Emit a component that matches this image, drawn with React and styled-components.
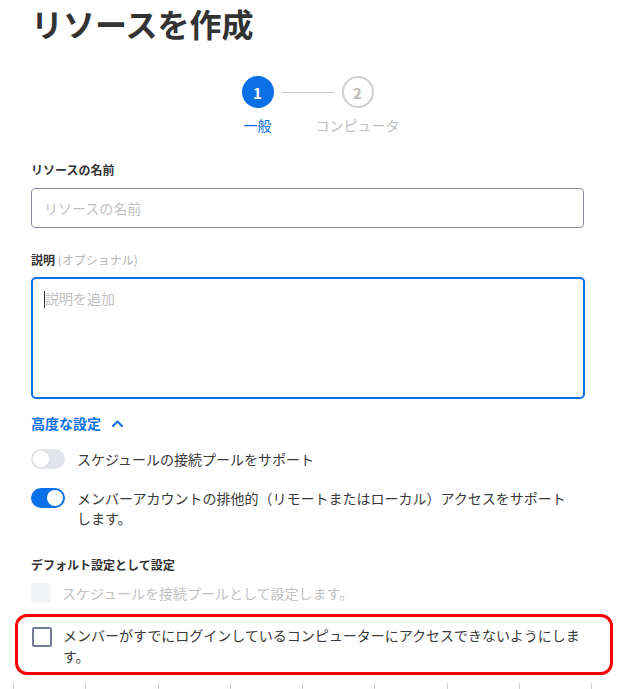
import React, { useState } from 'react'
import styled, { createGlobalStyle } from 'styled-components'

const GlobalStyle = createGlobalStyle`
	body {
		margin: 0;
		background: #fff;
		font-family: "Noto Sans CJK JP", "Noto Sans", sans-serif;
		color: #333;
	}
`

const BLUE = '#0b6fe6'

const Page = styled.div`
	width: 553px;
	padding-left: 31px;
	display: flex;
	flex-direction: column;
`

const Title = styled.h1`
	margin: 3px 0 0 0;
	font-size: 32px;
	line-height: 40px;
	font-weight: 700;
	color: #333;
`

const Stepper = styled.div`
	margin-top: 33px;
	display: flex;
	justify-content: center;
	align-items: flex-start;
`

const Step = styled.div`
	width: 32px;
	display: flex;
	flex-direction: column;
	align-items: center;
`

const StepCircle = styled.div`
	width: 32px;
	height: 32px;
	box-sizing: border-box;
	border-radius: 50%;
	display: flex;
	align-items: center;
	justify-content: center;
	font-size: 15px;
	font-weight: 700;
	background: ${(p) => (p.$active ? BLUE : '#fff')};
	border: 2px solid ${(p) => (p.$active ? BLUE : '#cfcfcf')};
	color: ${(p) => (p.$active ? '#fff' : '#bdbdbd')};
`

const StepLabel = styled.div`
	margin-top: 7px;
	font-size: 14px;
	line-height: 20px;
	white-space: nowrap;
	color: ${(p) => (p.$active ? BLUE : '#bdbdbd')};
`

const Connector = styled.div`
	width: 52px;
	height: 1px;
	margin: 16px 8px 0;
	background: #c4c4c4;
`

const FieldLabel = styled.label`
	margin-top: ${(p) => p.$top}px;
	font-size: 12px;
	line-height: 18px;
	font-weight: 700;
	color: #333;
`

const Optional = styled.span`
	font-weight: 400;
	color: #b5b5b5;
`

const TextInput = styled.input`
	margin-top: 9px;
	height: 40px;
	box-sizing: border-box;
	width: 553px;
	border: 1px solid #8a8ea6;
	border-radius: 4px;
	padding: 0 12px;
	font-family: inherit;
	font-size: 14px;
	outline: none;
	&::placeholder {
		color: #bfbfbf;
	}
`

const TextArea = styled.div`
	margin-top: 8px;
	height: 122px;
	width: 554px;
	box-sizing: border-box;
	border: 2px solid ${BLUE};
	border-radius: 5px;
	padding: 9px 11px;
	font-size: 14px;
	line-height: 20px;
	color: #bfbfbf;
`

const Caret = styled.span`
	display: inline-block;
	width: 1px;
	height: 17px;
	background: #333;
	vertical-align: -4px;
`

const Advanced = styled.button`
	margin-top: 14px;
	align-self: flex-start;
	display: flex;
	align-items: center;
	gap: 11px;
	padding: 0;
	border: none;
	background: none;
	font-family: inherit;
	font-size: 14px;
	line-height: 20px;
	font-weight: 600;
	color: ${BLUE};
`

const ToggleRow = styled.div`
	margin-top: ${(p) => p.$top}px;
	display: flex;
	align-items: flex-start;
	gap: 12px;
`

const Switch = styled.span`
	flex: none;
	width: 34px;
	height: 20px;
	border-radius: 10px;
	box-sizing: border-box;
	padding: 2px;
	display: flex;
	justify-content: ${(p) => (p.$on ? 'flex-end' : 'flex-start')};
	background: ${(p) => (p.$on ? BLUE : '#e1e4e8')};
	&::after {
		content: '';
		width: 16px;
		height: 16px;
		border-radius: 50%;
		background: #fff;
	}
`

const RowText = styled.span`
	max-width: 496px;
	font-size: 14px;
	line-height: 20px;
	color: ${(p) => (p.$muted ? '#c2c2c2' : '#3a3a3a')};
`

const CheckRow = styled.div`
	margin-top: ${(p) => p.$top}px;
	display: flex;
	align-items: flex-start;
	gap: ${(p) => p.$gap}px;
`

const Box = styled.span`
	flex: none;
	width: 20px;
	height: 20px;
	box-sizing: border-box;
	border-radius: 2px;
	margin-top: ${(p) => p.$offset || 0}px;
	background: ${(p) => (p.$disabled ? '#f3f4f6' : '#fff')};
	border: ${(p) => (p.$disabled ? 'none' : '2px solid #767b95')};
`

const Highlight = styled.div`
	margin: 11px 0 0 -16px;
	width: 598px;
	box-sizing: border-box;
	border: 3px solid #ff0000;
	border-radius: 12px;
	padding: 8px 21px 5px 14px;
`

const HighlightText = styled.span`
	font-size: 14px;
	line-height: 21px;
	color: #3a3a3a;
`

const Ruler = styled.div`
	margin: 8px 0 0 -18px;
	width: 579px;
	display: flex;
	justify-content: space-between;
`

const Tick = styled.span`
	width: 1px;
	height: 6px;
	background: #d0d0d0;
`

const ChevronUp = () => (
	<svg width="11" height="7" viewBox="0 0 11 7" fill="none">
		<path d="M1 6 L5.5 1.5 L10 6" stroke={BLUE} strokeWidth="2" strokeLinecap="round" strokeLinejoin="round" />
	</svg>
)

export default function App() {
	const [pool, setPool] = useState(false)
	const [exclusive, setExclusive] = useState(true)

	return (
		<Page>
			<GlobalStyle />
			<Title>リソースを作成</Title>

			<Stepper>
				<Step>
					<StepCircle $active>1</StepCircle>
					<StepLabel $active>一般</StepLabel>
				</Step>
				<Connector />
				<Step>
					<StepCircle>2</StepCircle>
					<StepLabel>コンピュータ</StepLabel>
				</Step>
			</Stepper>

			<FieldLabel $top={26}>リソースの名前</FieldLabel>
			<TextInput placeholder="リソースの名前" />

			<FieldLabel $top={23}>
				説明 <Optional>(オプショナル)</Optional>
			</FieldLabel>
			<TextArea>
				<Caret />説明を追加
			</TextArea>

			<Advanced>
				高度な設定
				<ChevronUp />
			</Advanced>

			<ToggleRow $top={16} onClick={() => setPool(!pool)}>
				<Switch $on={pool} />
				<RowText>スケジュールの接続プールをサポート</RowText>
			</ToggleRow>
			<ToggleRow $top={19} onClick={() => setExclusive(!exclusive)}>
				<Switch $on={exclusive} />
				<RowText>メンバーアカウントの排他的（リモートまたはローカル）アクセスをサポートします。</RowText>
			</ToggleRow>

			<FieldLabel $top={28}>デフォルト設定として設定</FieldLabel>
			<CheckRow $top={9} $gap={11}>
				<Box $disabled />
				<RowText $muted>スケジュールを接続プールとして設定します。</RowText>
			</CheckRow>

			<Highlight>
				<CheckRow $top={0} $gap={11}>
					<Box $offset={2} />
					<HighlightText>
						メンバーがすでにログインしているコンピューターにアクセスできないようにします。
					</HighlightText>
				</CheckRow>
			</Highlight>

			<Ruler>
				{Array.from({ length: 9 }).map((_, i) => (
					<Tick key={i} />
				))}
			</Ruler>
		</Page>
	)
}
